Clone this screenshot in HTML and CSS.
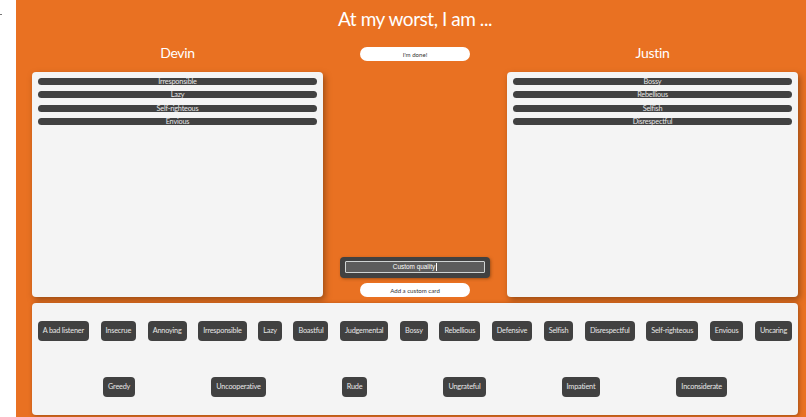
FILE: index.html
```html
<!DOCTYPE html>
<html lang="en">
<head>
<meta charset="utf-8">
<title>At my worst, I am ...</title>
<link rel="stylesheet" href="styles.css">
</head>
<body>
<aside class="margin"><span class="tick"></span></aside>
<main class="app">
  <h1 class="title">At my worst, I am ...</h1>
  <section class="board">
    <div class="column">
      <h2 class="name">Devin</h2>
      <ul class="panel">
        <li class="chosen">Irresponsible</li>
        <li class="chosen">Lazy</li>
        <li class="chosen">Self-righteous</li>
        <li class="chosen">Envious</li>
      </ul>
    </div>
    <div class="middle">
      <button class="pill">I'm done!</button>
      <div class="spacer"></div>
      <div class="custom"><div class="custom-input"><span class="custom-text">Custom quality</span></div></div>
      <button class="pill">Add a custom card</button>
    </div>
    <div class="column">
      <h2 class="name">Justin</h2>
      <ul class="panel">
        <li class="chosen">Bossy</li>
        <li class="chosen">Rebellious</li>
        <li class="chosen">Selfish</li>
        <li class="chosen">Disrespectful</li>
      </ul>
    </div>
  </section>
  <section class="pool">
    <div class="row">
      <span class="card">A bad listener</span>
      <span class="card">Insecrue</span>
      <span class="card">Annoying</span>
      <span class="card">Irresponsible</span>
      <span class="card">Lazy</span>
      <span class="card">Boastful</span>
      <span class="card">Judgemental</span>
      <span class="card">Bossy</span>
      <span class="card">Rebellious</span>
      <span class="card">Defensive</span>
      <span class="card">Selfish</span>
      <span class="card">Disrespectful</span>
      <span class="card">Self-righteous</span>
      <span class="card">Envious</span>
      <span class="card">Uncaring</span>
    </div>
    <div class="row row-inset">
      <span class="card">Greedy</span>
      <span class="card">Uncooperative</span>
      <span class="card">Rude</span>
      <span class="card">Ungrateful</span>
      <span class="card">Impatient</span>
      <span class="card">Inconsiderate</span>
    </div>
  </section>
</main>
</body>
</html>
```
FILE: styles.css
```css
* { box-sizing: border-box; }
html, body { margin: 0; height: 100%; }
body {
  display: flex;
  width: 806px;
  height: 417px;
  overflow: hidden;
  background: #fff;
  font-family: "Lato", "Liberation Sans", sans-serif;
}
.margin { width: 16px; flex: none; padding-top: 14px; }
.tick { display: block; width: 2px; height: 1px; background: #777; }
.app {
  flex: 1;
  display: flex;
  flex-direction: column;
  background: #e97122;
  padding: 0 8px 2px 16px;
  min-width: 0;
}
.title {
  margin: 0;
  height: 38px;
  line-height: 38px;
  font-size: 19px;
  font-weight: 400;
  letter-spacing: -0.45px;
  color: #fff;
  text-align: center;
}
.board {
  display: grid;
  grid-template-columns: 291px 1fr 291px;
  height: 259px;
  margin-bottom: 6px;
}
.column { display: flex; flex-direction: column; min-height: 0; }
.name {
  margin: 0;
  height: 34px;
  line-height: 30px;
  font-size: 14px;
  font-weight: 400;
  letter-spacing: -0.3px;
  color: #fff;
  text-align: center;
}
.panel {
  list-style: none;
  margin: 0;
  flex: 1;
  padding: 6px;
  display: flex;
  flex-direction: column;
  gap: 6.3px;
  background: #f4f4f4;
  border-radius: 4px;
  box-shadow: 2px 3px 6px rgba(90, 45, 10, 0.55);
}
.chosen {
  height: 7px;
  line-height: 7px;
  background: #414141;
  border-radius: 4px;
  color: #e8e8e8;
  font-size: 7.3px;
  letter-spacing: -0.2px;
  text-align: center;
}
.middle {
  display: flex;
  flex-direction: column;
  align-items: center;
  padding-top: 9px;
}
.spacer { flex: 1; }
.pill {
  width: 110px;
  height: 14px;
  padding: 0;
  border: 0;
  border-radius: 7px;
  background: #fff;
  color: #333;
  font-family: "Lato", "Liberation Sans", sans-serif;
  font-size: 6.1px;
}
.custom {
  width: 150px;
  height: 21px;
  padding: 4px 5px;
  margin-bottom: 5px;
  background: #414141;
  border-radius: 4px;
  box-shadow: 1px 1px 3px rgba(90, 45, 10, 0.5);
}
.custom-input {
  display: flex;
  align-items: center;
  justify-content: center;
  width: 100%;
  height: 12px;
  border: 1px solid #cfd3d3;
  border-radius: 1px;
  background: #5c5c5c;
}
.custom-text {
  line-height: 8px;
  padding-right: 1px;
  border-right: 1px solid #fff;
  color: #fff;
  font-family: "Liberation Sans", sans-serif;
  font-size: 6.4px;
}
.pool {
  flex: 1;
  display: flex;
  flex-direction: column;
  justify-content: space-around;
  background: #f4f4f4;
  border-radius: 4px;
  box-shadow: 1px 1px 4px rgba(90, 45, 10, 0.5);
}
.row { display: flex; justify-content: space-around; }
.row-inset { padding: 0 33px; }
.card {
  height: 20px;
  line-height: 20px;
  padding: 0 5px;
  background: #414141;
  border-radius: 4px;
  color: #e6e6e6;
  font-size: 7.3px;
  letter-spacing: -0.2px;
}
```
